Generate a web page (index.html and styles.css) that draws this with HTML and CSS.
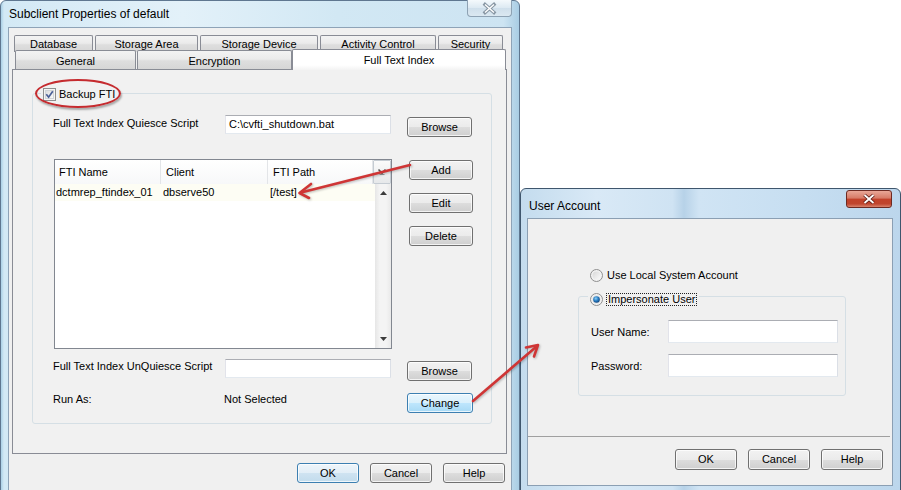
FILE: index.html
```html
<!DOCTYPE html>
<html>
<head>
<meta charset="utf-8">
<title>Subclient Properties</title>
<link rel="stylesheet" href="styles.css">
</head>
<body>
<div class="desk">
  <section class="win main-win">
    <header class="titlebar">
      <span class="title">Subclient Properties of default</span>
      <span class="close close-inactive">
        <svg width="45" height="17" viewBox="0 0 45 17"><path d="M18 4.5 L27 12.5 M27 4.5 L18 12.5" stroke="#8796a3" stroke-width="3.4" stroke-linecap="square" fill="none"/><path d="M18 4.5 L27 12.5 M27 4.5 L18 12.5" stroke="#ffffff" stroke-width="1.4" fill="none"/></svg>
      </span>
    </header>
    <div class="client">
      <div class="tabs">
        <div class="tabrow back">
          <div class="tab t-db">Database</div>
          <div class="tab t-sa">Storage Area</div>
          <div class="tab t-sd">Storage Device</div>
          <div class="tab t-ac">Activity Control</div>
          <div class="tab t-se">Security</div>
        </div>
        <div class="tabrow front">
          <div class="tab t-ge">General</div>
          <div class="tab t-en">Encryption</div>
          <div class="tab t-fti selected">Full Text Index</div>
        </div>
      </div>
      <div class="panel">
        <div class="group">
          <div class="legend">
            <svg class="cb" width="13" height="13" viewBox="0 0 13 13">
              <defs><linearGradient id="cbg" x1="0" y1="0" x2="1" y2="1"><stop offset="0" stop-color="#dcdcdc"/><stop offset="1" stop-color="#fbfbfb"/></linearGradient></defs>
              <rect x="0.5" y="0.5" width="12" height="12" fill="#f4f4f4" stroke="#8e8f8f"/>
              <rect x="2.5" y="2.5" width="8" height="8" fill="url(#cbg)" stroke="#d0d4d8"/>
              <path d="M3.3 6.3 L5.6 9.2 L9.8 3.2" stroke="#4a5f97" stroke-width="1.7" fill="none"/>
            </svg>
            <span>Backup FTI</span>
          </div>
          <div class="row row-q">
            <span class="lbl lbl-q">Full Text Index Quiesce Script</span>
            <div class="field">C:\cvfti_shutdown.bat</div>
            <div class="btn btn-browse">Browse</div>
          </div>
          <div class="listrow">
            <div class="list">
              <div class="lhead">
                <div class="hc c1">FTI Name</div>
                <div class="hc c2">Client</div>
                <div class="hc c3">FTI Path</div>
                <div class="hdrop"><svg width="10" height="8" viewBox="0 0 10 8"><path d="M1.5 1.5 L5 5 L8.5 1.5" stroke="#555" stroke-width="1.6" fill="none"/><path d="M2.5 6.5 H7.5" stroke="#999" stroke-width="1"/></svg></div>
              </div>
              <div class="lbody">
                <div class="rows">
                  <div class="lrow">
                    <div class="dc c1">dctmrep_ftindex_01</div>
                    <div class="dc c2">dbserve50</div>
                    <div class="dc c3">[/test]</div>
                  </div>
                </div>
                <div class="vscroll">
                  <svg width="7" height="4" viewBox="0 0 7 4"><path d="M0 4 L3.5 0 L7 4 Z" fill="#3c3c3c"/></svg>
                  <svg width="7" height="4" viewBox="0 0 7 4"><path d="M0 0 L3.5 4 L7 0 Z" fill="#3c3c3c"/></svg>
                </div>
              </div>
            </div>
            <div class="btncol">
              <div class="btn btn-s">Add</div>
              <div class="btn btn-s">Edit</div>
              <div class="btn btn-s">Delete</div>
            </div>
          </div>
          <div class="row row-u">
            <span class="lbl lbl-u">Full Text Index UnQuiesce Script</span>
            <div class="field"></div>
            <div class="btn btn-browse">Browse</div>
          </div>
          <div class="row row-r">
            <span class="lbl lbl-r">Run As:</span>
            <span class="val-r">Not Selected</span>
            <div class="btn btn-change hot">Change</div>
          </div>
        </div>
      </div>
      <div class="footer">
        <div class="btn btn-f default">OK</div>
        <div class="btn btn-f">Cancel</div>
        <div class="btn btn-f">Help</div>
      </div>
    </div>
  </section>

  <section class="win ua-win">
    <header class="titlebar ua-title">
      <span class="title">User Account</span>
      <span class="close close-red">
        <svg width="46" height="18" viewBox="0 0 46 18"><path d="M18.5 5 L27.5 13 M27.5 5 L18.5 13" stroke="#5a1a14" stroke-width="3.6" fill="none"/><path d="M18.5 5 L27.5 13 M27.5 5 L18.5 13" stroke="#ffffff" stroke-width="1.8" fill="none"/></svg>
      </span>
    </header>
    <div class="client ua-client">
      <div class="radrow">
        <svg class="rad" width="13" height="13" viewBox="0 0 13 13">
          <defs><linearGradient id="rg" x1="0" y1="0" x2="1" y2="1"><stop offset="0" stop-color="#d8d8d8"/><stop offset="1" stop-color="#fafafa"/></linearGradient></defs>
          <circle cx="6.5" cy="6.5" r="6" fill="#f2f2f2" stroke="#8f8f8f"/>
          <circle cx="6.5" cy="6.5" r="4" fill="url(#rg)"/>
        </svg>
        <span>Use Local System Account</span>
      </div>
      <div class="ugroup">
        <div class="ulegend">
          <svg class="rad" width="13" height="13" viewBox="0 0 13 13">
            <defs><radialGradient id="rs" cx="0.4" cy="0.35" r="0.7"><stop offset="0" stop-color="#8fd0f7"/><stop offset="0.5" stop-color="#2a7fc4"/><stop offset="1" stop-color="#0f3f78"/></radialGradient></defs>
            <circle cx="6.5" cy="6.5" r="6" fill="#f2f2f2" stroke="#8f8f8f"/>
            <circle cx="6.5" cy="6.5" r="4.2" fill="#e4e4e4"/>
            <circle cx="6.5" cy="6.5" r="3.3" fill="url(#rs)"/>
          </svg>
          <span class="focus">Impersonate User</span>
        </div>
        <div class="urow urow-1">
          <span class="ulbl">User Name:</span>
          <div class="field ufield"></div>
        </div>
        <div class="urow urow-2">
          <span class="ulbl">Password:</span>
          <div class="field ufield"></div>
        </div>
      </div>
      <div class="sep"></div>
      <div class="ufooter">
        <div class="btn btn-u">OK</div>
        <div class="btn btn-u">Cancel</div>
        <div class="btn btn-u">Help</div>
      </div>
    </div>
  </section>

  <svg class="arrows" width="901" height="490" viewBox="0 0 901 490">
    <g stroke="#cf3535" stroke-width="2.6" fill="none" stroke-linecap="round" stroke-linejoin="round">
      <path d="M410 165 L301 192.5"/>
      <path d="M311 184 L299.5 193 L309 198"/>
      <path d="M473 401 L536.5 346.5"/>
      <path d="M526 347.5 L538 345 L534 356.5"/>
    </g>
  </svg>
  <div class="ellipse"></div>
</div>
</body>
</html>
```
FILE: styles.css
```css
* { box-sizing: border-box; }
html, body { margin: 0; padding: 0; }
body {
  width: 901px; height: 490px; overflow: hidden; background: #ffffff;
  font-family: "Liberation Sans", Arial, sans-serif; font-size: 11px; color: #000;
}
.desk { position: relative; width: 901px; height: 490px; }

/* windows */
.win {
  position: absolute; display: flex; flex-direction: column;
  border: 1px solid #5f7790; border-radius: 6px 6px 0 0;
}
.main-win {
  left: 0; top: 0; width: 520px; height: 500px;
  background: linear-gradient(90deg, #aad0e6 0, #d3e9f5 3px, #e3f1f9 35%, #d2e8f4 65%, #cde4f2 97%, #a9cde4 100%);
}
.ua-win {
  left: 520px; top: 188px; width: 381px; height: 310px;
  border-color: #3f566d;
  background: linear-gradient(90deg, #c4dcee 0, #d9e9f6 20%, #cfe3f3 40%, #b7d2e8 43%, #d0e4f4 47%, #c6def1 75%, #bcd6ec 100%);
}
.titlebar { display: flex; align-items: flex-start; flex: none; }
.main-win .titlebar { height: 26px; padding-left: 8px; }
.ua-win .titlebar { height: 29px; padding-left: 8px; }
.title { font-size: 12px; line-height: 15px; color: #000; }
.main-win .title { padding-top: 6px; }
.ua-win .title { padding-top: 10px; }
.close { margin-left: auto; display: block; }
.close svg { display: block; }
.close-inactive {
  width: 45px; height: 17px; margin-right: 7px; margin-top: -1px;
  border: 1px solid #8ea2b3; border-top: none; border-radius: 0 0 4px 4px;
  background: linear-gradient(#f4f9fc, #dce9f2 50%, #cfdfeb 51%, #dbe8f1);
}
.close-inactive svg { margin-left: -1px; }
.close-red {
  width: 46px; height: 18px; margin-right: 8px; margin-top: 1px;
  border: 1px solid #6d2a22; border-radius: 3px;
  background: linear-gradient(#e9a797 0%, #d67a66 45%, #c2422a 50%, #c0452e 80%, #d9836d 100%);
}
.close-red svg { margin: -1px 0 0 -1px; }

.client {
  flex: 1; background: #f0f0f0;
  border: 1px solid #8ea3b7; border-bottom: none;
  display: flex; flex-direction: column;
}
.main-win .client { margin: 0 7px; }

/* tabs */
.tabs { margin-left: 6px; height: 34px; margin-top: 7px; position: relative; z-index: 2; display: flex; flex-direction: column; }
.tabrow { display: flex; }
.tabrow.back { height: 17px; gap: 2px; margin-left: -1px; }
.tabrow.front { height: 19px; margin-top: -2px; position: relative; }
.tab {
  border: 1px solid #898c95; border-bottom: none; border-radius: 2px 2px 0 0;
  background: linear-gradient(#f3f3f3 0%, #ebebeb 45%, #dedede 55%, #d6d6d6 100%);
  text-align: center; line-height: 13px; height: 100%;
}
.back .tab { padding-top: 2px; }
.front .tab { padding-top: 4px; }
.t-db { width: 79px; }
.t-sa { width: 103px; }
.t-sd { width: 118px; }
.t-ac { width: 116px; }
.t-se { width: 65px; }
.t-ge { width: 121px; margin-right: 1px; }
.t-en { width: 155px; }
.t-fti { width: 214px; }
.tab.selected {
  background: linear-gradient(#ffffff 0%, #ffffff 75%, #f3f3f3 100%);
  margin-top: -1px; height: 21px; padding-top: 4px;
}

/* panel */
.panel {
  margin-left: 3px; width: 495px; height: 385px;
  border: 1px solid #898c95; background: #f1f1f1;
}
.group {
  margin: 23px 0 0 19px; width: 460px; height: 331px;
  border: 1px solid #d5dfe5; border-radius: 3px;
  display: flex; flex-direction: column; padding-left: 20px;
}
.legend {
  align-self: flex-start; display: flex; align-items: center; gap: 3px;
  height: 13px; margin-top: -6px; margin-left: -12px; padding: 0 3px 0 2px;
  background: #f1f1f1; line-height: 13px;
}
.legend svg, .rad { display: block; flex: none; }

.row { display: flex; align-items: flex-start; }
.lbl { line-height: 13px; flex: none; }
.row-q { margin-top: 14px; }
.lbl-q { width: 172px; padding-top: 2px; }
.field {
  width: 166px; height: 19px; flex: none; background: #fff;
  border: 1px solid; border-color: #abadb3 #dbdfe6 #e3e9ef #e2e3ea;
  padding: 2px 0 0 3px; line-height: 13px;
}
.btn {
  display: flex; align-items: center; justify-content: center; flex: none;
  height: 20px; border: 1px solid #707070; border-radius: 3px;
  background: linear-gradient(#f2f2f2 0%, #ebebeb 50%, #dddddd 51%, #cfcfcf 100%);
  box-shadow: inset 0 0 0 1px rgba(255,255,255,0.75);
  line-height: 13px;
}
.btn.default {
  border-color: #3c7fb1;
  background: linear-gradient(#eef5fa 0%, #e2eef7 50%, #cfe3f1 51%, #c2dced 100%);
}
.btn.hot {
  border-color: #3c7fb1;
  background: linear-gradient(#eaf6fd 0%, #d9f0fc 50%, #bee6fd 51%, #a7d9f5 100%);
}
.btn-browse { width: 65px; margin-left: 16px; margin-top: 2px; }

.listrow { display: flex; margin-top: 22px; align-items: flex-start; }
.list {
  margin-left: 1px; width: 338px; height: 190px; flex: none;
  border: 1px solid #828790; background: #fff;
  display: flex; flex-direction: column;
}
.lhead { display: flex; height: 24px; background: linear-gradient(#ffffff, #f7f8f9); flex: none; }
.hc { line-height: 24px; border-right: 1px solid #e3e5e8; flex: none; }
.hc.c1 { width: 106px; padding-left: 4px; }
.hc.c2 { width: 107px; padding-left: 5px; }
.hc.c3 { width: 105px; padding-left: 5px; }
.hdrop {
  width: 18px; height: 24px; border: 1px solid #c5ccd3; border-radius: 1px;
  background: linear-gradient(#fbfbfb, #e6e8ea);
  display: flex; align-items: center; justify-content: center;
}
.hdrop svg { display: block; }
.lbody { flex: 1; display: flex; }
.rows { flex: 1; }
.lrow { display: flex; height: 17px; background: #fdfdf4; line-height: 17px; }
.dc { flex: none; white-space: nowrap; }
.dc.c1 { width: 106px; padding-left: 1px; }
.dc.c2 { width: 107px; padding-left: 2px; }
.dc.c3 { padding-left: 2px; }
.vscroll {
  width: 16px; flex: none;
  background: linear-gradient(90deg, #e6e6e6, #f4f4f4 30%, #f4f4f4 70%, #e9e9e9);
  display: flex; flex-direction: column; justify-content: space-between; align-items: center;
  padding: 7px 0 7px 1px;
}
.vscroll svg { display: block; }
.btncol { margin-left: 17px; padding-top: 1px; display: flex; flex-direction: column; gap: 13px; }
.btn-s { width: 64px; }

.row-u { margin-top: 10px; }
.lbl-u { width: 172px; padding-top: 1px; }
.row-r { margin-top: 12px; }
.lbl-r { width: 171px; padding-top: 0; }
.val-r { width: 183px; line-height: 13px; flex: none; }
.btn-change { width: 66px; }

.footer { display: flex; justify-content: flex-end; gap: 11px; margin-top: 9px; padding-right: 6px; }
.btn-f { width: 62px; }

/* user account dialog */
.ua-client { margin-left: 6px; width: 366px; height: 268px; flex: none; border: 1px solid #8b9fb3; }
.radrow { display: flex; align-items: center; gap: 4px; margin-top: 50px; padding-left: 62px; height: 13px; line-height: 13px; }
.ugroup {
  margin: 14px 0 0 50px; width: 268px; height: 100px;
  border: 1px solid #d5dfe5; border-radius: 3px;
  display: flex; flex-direction: column;
}
.ulegend {
  align-self: flex-start; display: flex; align-items: center; gap: 3px;
  margin: -4px 0 0 9px; padding: 0 2px; height: 13px; background: #f0f0f0;
}
.focus { border: 1px dotted #222; line-height: 11px; padding: 0 1px; height: 13px; }
.urow { display: flex; align-items: center; padding-left: 12px; }
.urow-1 { margin-top: 14px; }
.urow-2 { margin-top: 11px; }
.ulbl { width: 77px; flex: none; }
.ufield { width: 170px; height: 23px; }
.sep { margin-top: 40px; width: 362px; height: 1px; background: #a0a0a0; flex: none; }
.ufooter { display: flex; justify-content: flex-end; gap: 11px; margin-top: 12px; padding-right: 9px; }
.btn-u { width: 62px; height: 21px; }

/* annotations */
.arrows { position: absolute; left: 0; top: 0; z-index: 10; pointer-events: none; filter: drop-shadow(1px 1px 1px rgba(0,0,0,0.25)); }
.ellipse {
  position: absolute; left: 35px; top: 79px; width: 86px; height: 29px; z-index: 10;
  border: 2px solid #c52b2f; border-radius: 50%;
  box-shadow: 1px 2px 2px rgba(0,0,0,0.3);
}
```
